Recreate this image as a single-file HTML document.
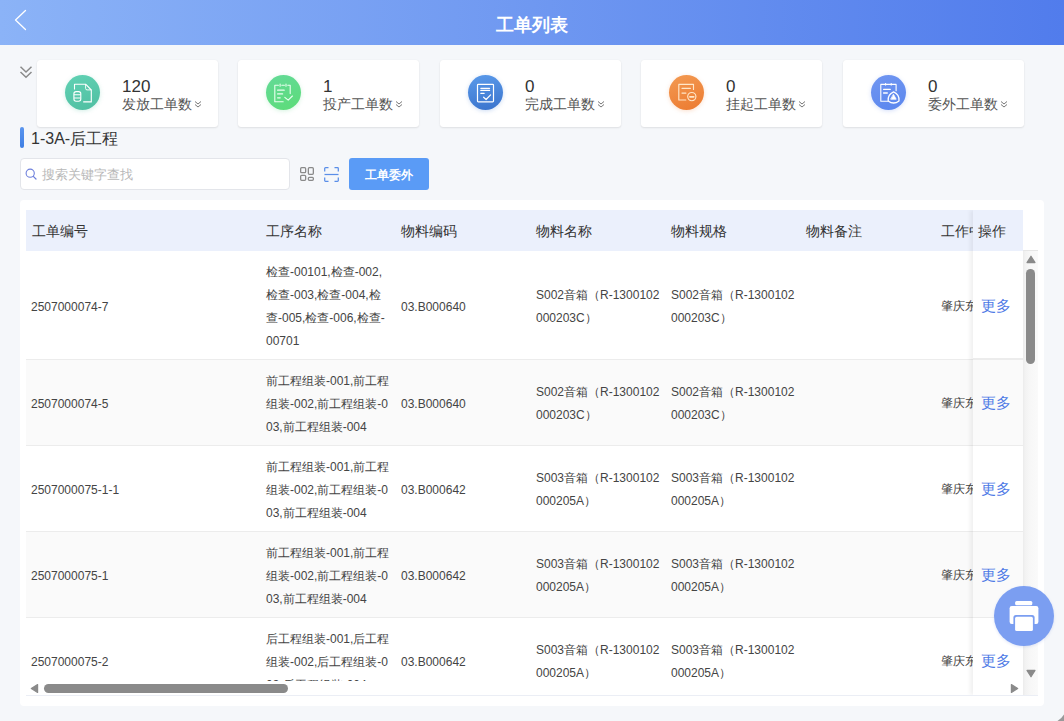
<!DOCTYPE html>
<html><head><meta charset="utf-8">
<style>
*{box-sizing:border-box;margin:0;padding:0}
html,body{width:1064px;height:721px;overflow:hidden}
body{background:#f5f7fa;font-family:"Liberation Sans",sans-serif;color:#333;position:relative}
.abs{position:absolute}
.hdr{left:0;top:0;width:1064px;height:45px;background:linear-gradient(90deg,#8bb3f7 0%,#6f98f1 50%,#517cec 100%)}
.hdr .title{position:absolute;left:0;width:1064px;top:12px;text-align:center;color:#fff;font-size:18px;font-weight:bold;line-height:26px}
.card{position:absolute;top:60px;width:181px;height:67px;background:#fff;border-radius:3px;box-shadow:0 1px 2px rgba(0,0,0,0.09),0 0 1px rgba(0,0,0,0.08)}
.card .ic{position:absolute;left:28px;top:15px;width:35px;height:35px;border-radius:50%}
.card .num{position:absolute;left:85px;top:17px;font-size:17px;line-height:20px;color:#333}
.card .lbl{position:absolute;left:85px;top:34px;font-size:14px;line-height:20px;color:#555;white-space:nowrap}
.card .lbl svg{vertical-align:middle;margin-left:2px;position:relative;top:-1px}
.sec{left:20px;top:127px;width:4px;height:21px;border-radius:2px;background:linear-gradient(180deg,#5a95ee,#3f7fe4)}
.sectxt{left:31px;top:128px;font-size:16px;line-height:22px;color:#333}
.search{left:20px;top:158px;width:270px;height:32px;background:#fff;border:1px solid #e3e5ea;border-radius:4px}
.search .ph{position:absolute;left:21px;top:7px;font-size:13px;line-height:18px;color:#b8b8b8}
.btn{left:349px;top:158px;width:80px;height:32px;background:#5a9bf6;border-radius:3px;color:#fff;font-size:12px;font-weight:bold;text-align:center;line-height:34px}
.panel{left:20px;top:200px;width:1024px;height:506px;background:#fff;border-radius:4px}
.tbl{left:26px;top:210px;width:997px;height:485px;overflow:hidden}
.th{position:absolute;left:0;top:0;width:997px;height:41px;background:#ebf0fc}
.th div{position:absolute;top:11px;font-size:14px;line-height:20px;color:#333;white-space:nowrap}
.row{position:absolute;left:0;width:997px;border-bottom:1px solid #ececec;background:#fff}
.row.alt{background:#fafafa}
.cell{position:absolute;font-size:12px;line-height:23px;color:#444;white-space:nowrap}
.wrap{white-space:nowrap}
.fix{position:absolute;left:947px;top:0;width:50px;height:485px;box-shadow:-3px 0 4px rgba(0,0,0,0.06)}
.more{color:#4e7ae6;font-size:15px;line-height:20px}
</style></head><body>

<div class="abs hdr">
  <svg class="abs" style="left:12px;top:8px" width="18" height="24" viewBox="0 0 18 24"><path d="M13.5 2.5 L3.5 12 L13.5 21.5" fill="none" stroke="#fff" stroke-width="1.3" stroke-linecap="round" stroke-linejoin="round"/></svg>
  <div class="title">工单列表</div>
</div>

<!-- collapse chevron -->
<svg class="abs" style="left:19px;top:65px" width="14" height="14" viewBox="0 0 14 14"><path d="M1.5 1.8 L7 7 L12.5 1.8 M1.5 7 L7 12.2 L12.5 7" fill="none" stroke="#8a8a8a" stroke-width="1.5"/></svg>

<div class="card" style="left:37px">
  <div class="ic" style="background:linear-gradient(160deg,#61d2b4,#4fbea1);box-shadow:0 1px 4px rgba(80,190,160,0.25)"><svg width="35" height="35" viewBox="0 0 35 35" fill="none" stroke="#fff" stroke-width="1.1" stroke-linejoin="round">
<path d="M9.5 14.5 V9.2 H20.6 L26.3 15 V26.9 H18.2"/><path d="M20.6 9.2 V13.4 a1.5 1.5 0 0 0 1.5 1.5 H26.3" stroke-width="0.9"/>
<rect x="8.9" y="16.6" width="6.9" height="9.6" rx="2.2"/><path d="M8.9 19.8 H15.8 M8.9 23 H15.8"/>
</svg></div>
  <div class="num">120</div>
  <div class="lbl">发放工单数<svg width="8" height="8" viewBox="0 0 8 8"><path d="M1 1.5 L4 4 L7 1.5 M1 4.5 L4 7 L7 4.5" fill="none" stroke="#777" stroke-width="1"/></svg></div>
</div>
<div class="card" style="left:238px">
  <div class="ic" style="background:linear-gradient(160deg,#64da98,#5cdc78);box-shadow:0 1px 4px rgba(90,210,130,0.25)"><svg width="35" height="35" viewBox="0 0 35 35" fill="none" stroke="#eafff0" stroke-width="1.1" stroke-linecap="round" stroke-linejoin="round">
<path d="M12.4 10.2 H8.8 V26.8 H17.2"/><path d="M21.8 10.2 H24.2 V18.6"/><path d="M14.1 9 V11.2 M20 9 V11.2 M15.8 10.2 H18.4"/>
<path d="M11.6 15.2 H18.2 M11.6 18.9 H16.6 M11.6 22.8 H14.2" stroke-width="1.2"/><path d="M18.8 22.3 L22.2 25.1 L26.4 21"/>
</svg></div>
  <div class="num">1</div>
  <div class="lbl">投产工单数<svg width="8" height="8" viewBox="0 0 8 8"><path d="M1 1.5 L4 4 L7 1.5 M1 4.5 L4 7 L7 4.5" fill="none" stroke="#777" stroke-width="1"/></svg></div>
</div>
<div class="card" style="left:440px">
  <div class="ic" style="background:linear-gradient(170deg,#5a9aea,#3a73cc);box-shadow:0 1px 4px rgba(60,120,210,0.25)"><svg width="35" height="35" viewBox="0 0 35 35" fill="none" stroke="#fff" stroke-width="1.2" stroke-linecap="round" stroke-linejoin="round">
<rect x="9.5" y="9.3" width="16" height="17.6" rx="0.8"/>
<path d="M12.8 13.3 H21.6 M12.8 15.4 H21.6 M12.8 18.3 H16.2"/><path d="M15.6 22.2 L18.1 24.5 L22.6 19.9"/>
</svg></div>
  <div class="num">0</div>
  <div class="lbl">完成工单数<svg width="8" height="8" viewBox="0 0 8 8"><path d="M1 1.5 L4 4 L7 1.5 M1 4.5 L4 7 L7 4.5" fill="none" stroke="#777" stroke-width="1"/></svg></div>
</div>
<div class="card" style="left:641px">
  <div class="ic" style="background:linear-gradient(160deg,#f39a52,#ec7a30);box-shadow:0 1px 4px rgba(240,130,60,0.25)"><svg width="35" height="35" viewBox="0 0 35 35" fill="none" stroke="#ffe6c8" stroke-width="1.15" stroke-linecap="round" stroke-linejoin="round">
<path d="M24.5 14.5 V9.3 H9.8 V25 H16.8"/>
<path d="M13 13.3 H21.4 M13 18 H16.9" stroke-width="1.25"/><circle cx="22.8" cy="21.6" r="4.1"/><path d="M20.9 21.8 H24.7" stroke-width="1.7"/>
</svg></div>
  <div class="num">0</div>
  <div class="lbl">挂起工单数<svg width="8" height="8" viewBox="0 0 8 8"><path d="M1 1.5 L4 4 L7 1.5 M1 4.5 L4 7 L7 4.5" fill="none" stroke="#777" stroke-width="1"/></svg></div>
</div>
<div class="card" style="left:843px">
  <div class="ic" style="background:linear-gradient(160deg,#7096f1,#5a86ee);box-shadow:0 1px 4px rgba(90,130,235,0.25)"><svg width="35" height="35" viewBox="0 0 35 35" fill="none" stroke="#fff" stroke-width="1.1" stroke-linecap="round" stroke-linejoin="round">
<path d="M9.8 15 V9.4 H25.1 V15.8 M9.8 15 V26.2 H16.8"/><path d="M14.6 8.4 V10.2 M20.2 8.4 V10.2" stroke-width="1"/>
<path d="M12.6 14.3 H19.3 M12.6 18 H16.3" stroke-width="1.3"/>
<path d="M22.6 16.8 A9 9 0 0 1 28 26 A9 9 0 0 1 17.2 26 A9 9 0 0 1 22.6 16.8 Z" stroke-width="1.3"/>
<path d="M22.6 19.6 L25.2 24.2 H20 Z" fill="#fff" stroke-width="0.8"/>
</svg></div>
  <div class="num">0</div>
  <div class="lbl">委外工单数<svg width="8" height="8" viewBox="0 0 8 8"><path d="M1 1.5 L4 4 L7 1.5 M1 4.5 L4 7 L7 4.5" fill="none" stroke="#777" stroke-width="1"/></svg></div>
</div>

<div class="abs sec"></div>
<div class="abs sectxt">1-3A-后工程</div>

<div class="abs search">
  <svg class="abs" style="left:4px;top:9px" width="13" height="13" viewBox="0 0 13 13"><circle cx="5.2" cy="5.2" r="4.1" fill="none" stroke="#6e80dc" stroke-width="1.1"/><path d="M8.3 8.3 L11 11" stroke="#6e80dc" stroke-width="1.2" stroke-linecap="round"/></svg>
  <div class="ph">搜索关键字查找</div>
</div>
<svg class="abs" style="left:300px;top:167px" width="14" height="14" viewBox="0 0 14 14" fill="none" stroke="#8a8a8a" stroke-width="1.3">
  <rect x="0.65" y="0.65" width="5" height="5" rx="1"/><rect x="0.65" y="8.35" width="5" height="5" rx="1"/>
  <rect x="8.35" y="0.65" width="5" height="6.7" rx="1"/><rect x="8.35" y="10.35" width="5" height="3" rx="1"/>
</svg>
<svg class="abs" style="left:324px;top:167px" width="15" height="15" viewBox="0 0 15 15" fill="none" stroke="#5a8ee8" stroke-width="1.25">
  <path d="M0.7 4.5 V1.5 a0.8 0.8 0 0 1 0.8 -0.8 H4.5 M10.5 0.7 H13.5 a0.8 0.8 0 0 1 0.8 0.8 V4.5 M14.3 10.5 V13.5 a0.8 0.8 0 0 1 -0.8 0.8 H10.5 M4.5 14.3 H1.5 a0.8 0.8 0 0 1 -0.8 -0.8 V10.5"/>
  <path d="M0.5 7.5 H14.5"/>
</svg>
<div class="abs btn">工单委外</div>

<div class="abs panel"></div>
<div class="abs tbl">
  <div class="th">
    <div style="left:6px">工单编号</div>
    <div style="left:240px">工序名称</div>
    <div style="left:375px">物料编码</div>
    <div style="left:510px">物料名称</div>
    <div style="left:645px">物料规格</div>
    <div style="left:780px">物料备注</div>
    <div style="left:915px">工作中心</div>
  </div>
  <!-- rows -->
  <div class="row" style="top:41px;height:109px">
    <div class="cell" style="left:5px;top:45px">2507000074-7</div>
    <div class="cell wrap" style="left:240px;top:10px">检查-00101,检查-002,<br>检查-003,检查-004,检<br>查-005,检查-006,检查-<br>00701</div>
    <div class="cell" style="left:375px;top:45px">03.B000640</div>
    <div class="cell" style="left:510px;top:33px">S002音箱（R-1300102<br>000203C）</div>
    <div class="cell" style="left:645px;top:33px">S002音箱（R-1300102<br>000203C）</div>
    <div class="cell" style="left:915px;top:44px">肇庆东</div>
  </div>
  <div class="row alt" style="top:150px;height:86px">
    <div class="cell" style="left:5px;top:33px">2507000074-5</div>
    <div class="cell wrap" style="left:240px;top:10px">前工程组装-001,前工程<br>组装-002,前工程组装-0<br>03,前工程组装-004</div>
    <div class="cell" style="left:375px;top:33px">03.B000640</div>
    <div class="cell" style="left:510px;top:21px">S002音箱（R-1300102<br>000203C）</div>
    <div class="cell" style="left:645px;top:21px">S002音箱（R-1300102<br>000203C）</div>
    <div class="cell" style="left:915px;top:32px">肇庆东</div>
  </div>
  <div class="row" style="top:236px;height:86px">
    <div class="cell" style="left:5px;top:33px">2507000075-1-1</div>
    <div class="cell wrap" style="left:240px;top:10px">前工程组装-001,前工程<br>组装-002,前工程组装-0<br>03,前工程组装-004</div>
    <div class="cell" style="left:375px;top:33px">03.B000642</div>
    <div class="cell" style="left:510px;top:21px">S003音箱（R-1300102<br>000205A）</div>
    <div class="cell" style="left:645px;top:21px">S003音箱（R-1300102<br>000205A）</div>
    <div class="cell" style="left:915px;top:32px">肇庆东</div>
  </div>
  <div class="row alt" style="top:322px;height:86px">
    <div class="cell" style="left:5px;top:33px">2507000075-1</div>
    <div class="cell wrap" style="left:240px;top:10px">前工程组装-001,前工程<br>组装-002,前工程组装-0<br>03,前工程组装-004</div>
    <div class="cell" style="left:375px;top:33px">03.B000642</div>
    <div class="cell" style="left:510px;top:21px">S003音箱（R-1300102<br>000205A）</div>
    <div class="cell" style="left:645px;top:21px">S003音箱（R-1300102<br>000205A）</div>
    <div class="cell" style="left:915px;top:32px">肇庆东</div>
  </div>
  <div class="row" style="top:408px;height:86px">
    <div class="cell" style="left:5px;top:33px">2507000075-2</div>
    <div class="cell wrap" style="left:240px;top:10px">后工程组装-001,后工程<br>组装-002,后工程组装-0<br>03,后工程组装-004</div>
    <div class="cell" style="left:375px;top:33px">03.B000642</div>
    <div class="cell" style="left:510px;top:21px">S003音箱（R-1300102<br>000205A）</div>
    <div class="cell" style="left:645px;top:21px">S003音箱（R-1300102<br>000205A）</div>
    <div class="cell" style="left:915px;top:32px">肇庆东</div>
  </div>
  <div style="position:absolute;left:0;top:471px;width:997px;height:14px;background:#fff"></div>
  <!-- fixed column -->
  <div class="fix">
    <div style="position:absolute;left:0;top:0;width:51px;height:41px;background:#ebf0fc"></div>
    <div style="position:absolute;left:5px;top:11px;font-size:14px;line-height:20px;color:#333">操作</div>
    <div style="position:absolute;left:0;top:41px;width:51px;height:108px;background:#fff;border-bottom:1px solid #ececec"></div>
    <div style="position:absolute;left:0;top:150px;width:51px;height:86px;background:#fafafa;border-bottom:1px solid #ececec"></div>
    <div style="position:absolute;left:0;top:236px;width:51px;height:86px;background:#fff;border-bottom:1px solid #ececec"></div>
    <div style="position:absolute;left:0;top:322px;width:51px;height:86px;background:#fafafa;border-bottom:1px solid #ececec"></div>
    <div style="position:absolute;left:0;top:408px;width:51px;height:86px;background:#fff;border-bottom:1px solid #ececec"></div>
    <div class="more" style="position:absolute;left:8px;top:86px">更多</div>
    <div class="more" style="position:absolute;left:8px;top:183px">更多</div>
    <div class="more" style="position:absolute;left:8px;top:269px">更多</div>
    <div class="more" style="position:absolute;left:8px;top:355px">更多</div>
    <div class="more" style="position:absolute;left:8px;top:441px">更多</div>
  </div>
</div>

<!-- vertical scrollbar -->
<div class="abs" style="left:1023px;top:250px;width:15px;height:445px;background:linear-gradient(90deg,#ebebeb 0,#f2f2f2 2px,#f7f7f7 7px,#fafafa 100%);border-top:1px solid #e6e6e6"></div>
<svg class="abs" style="left:1026px;top:255px" width="10" height="9" viewBox="0 0 10 9"><path d="M5 1.2 L9 7.6 H1 Z" fill="#8a8a8a" stroke="#8a8a8a" stroke-width="1.2" stroke-linejoin="round"/></svg>
<div class="abs" style="left:1026px;top:269px;width:9px;height:95px;border-radius:5px;background:#8a8a8a"></div>
<svg class="abs" style="left:1026px;top:669px" width="10" height="9" viewBox="0 0 10 9"><path d="M1 1.4 H9 L5 7.8 Z" fill="#8a8a8a" stroke="#8a8a8a" stroke-width="1.2" stroke-linejoin="round"/></svg>

<!-- horizontal scrollbar -->
<div class="abs" style="left:26px;top:695px;width:1012px;height:1px;background:#ebeef5"></div>
<svg class="abs" style="left:30px;top:683px" width="9" height="11" viewBox="0 0 9 11"><path d="M1.3 5.5 L7.6 1.6 V9.4 Z" fill="#8a8a8a" stroke="#8a8a8a" stroke-width="1.2" stroke-linejoin="round"/></svg>
<div class="abs" style="left:44px;top:684px;width:244px;height:9px;border-radius:5px;background:#8a8a8a"></div>
<svg class="abs" style="left:1010px;top:683px" width="9" height="11" viewBox="0 0 9 11"><path d="M7.7 5.5 L1.4 1.6 V9.4 Z" fill="#8a8a8a" stroke="#8a8a8a" stroke-width="1.2" stroke-linejoin="round"/></svg>

<!-- print FAB -->
<div class="abs" style="left:994px;top:586px;width:60px;height:60px;border-radius:50%;background:#7b9ef1;box-shadow:0 1px 3px rgba(100,130,220,0.2)">
<svg width="60" height="60" viewBox="0 0 60 60">
<rect x="21.1" y="15.1" width="17.2" height="4.2" rx="1.5" fill="#fff"/>
<rect x="15.6" y="20.1" width="28.8" height="17.8" rx="2.2" fill="#fff"/>
<rect x="19.4" y="29" width="21.2" height="18" rx="2.5" fill="#7b9ef1"/>
<rect x="21.1" y="30.7" width="17.8" height="14.4" rx="1.6" fill="#fff"/>
</svg></div>

<svg class="abs" style="left:1054px;top:711px" width="10" height="10" viewBox="0 0 10 10"><path d="M10 3.5 L10 10 L3.5 10 Q7.5 7.5 10 3.5 Z" fill="#7a7a7a" opacity="0.75"/></svg>
</body></html>
